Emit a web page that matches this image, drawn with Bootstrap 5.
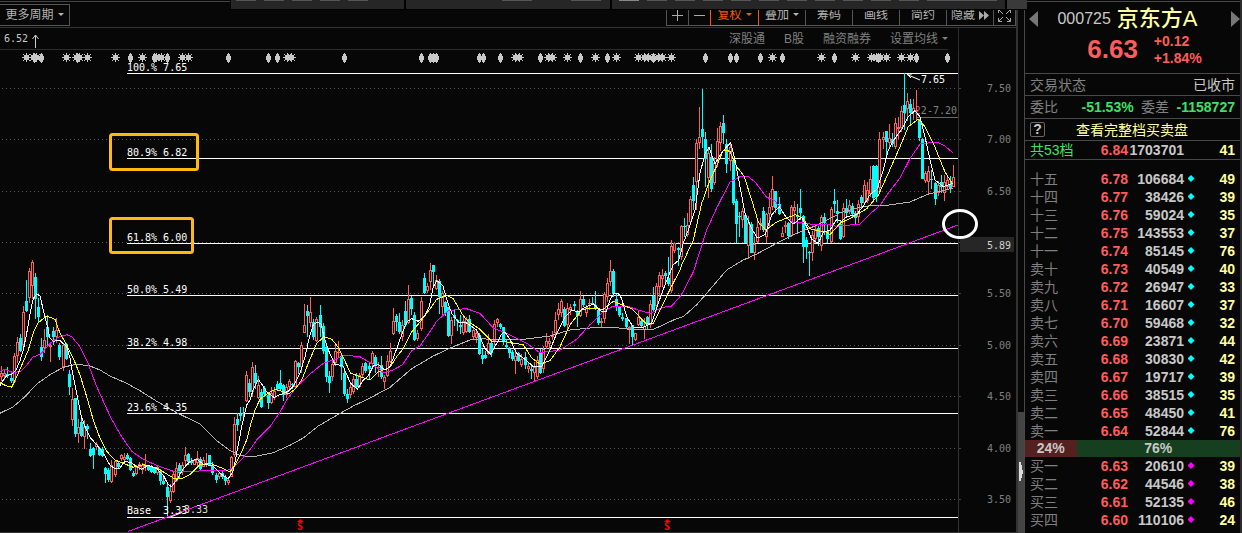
<!DOCTYPE html>
<html lang="zh-CN">
<head>
<meta charset="utf-8">
<meta name="viewport" content="width=device-width, initial-scale=1">
<title>京东方A 000725</title>
<link href="https://cdn.jsdelivr.net/npm/bootstrap@5.3.0/dist/css/bootstrap.min.css" rel="stylesheet">
<style>
:root{--edge:#333;--line:#484848;--red:#ff5c5c;--green:#3ee065;--cream:#ffffa0}
body{background:#070707;color:#c8c8c8;font-family:"Liberation Sans","Noto Sans CJK SC",sans-serif;font-size:14px;line-height:18px}
button{font:inherit;color:inherit;background:none;border:0;padding:0;line-height:18px}
.tools{height:28px;border-bottom:1px solid var(--edge);font-size:12px;padding-top:4px;box-shadow:inset 0 1px #070707,inset 0 2px #444}
.tools button{height:22px;border:1px solid #555;white-space:nowrap;color:#b4b4b4}
.tools .tool{width:48px;margin-left:-1px}
.tools .tool-sq{width:23px;margin-left:-1px}
.tools .tool-on{width:49px;border-color:#f25a0c;color:#f25a0c;position:relative}
.period{width:71px;margin-left:-1px}
.caret{display:inline-block;border:3px solid transparent;border-top-color:currentColor;border-bottom:0;vertical-align:3px;margin-left:4px}
.strip{top:0;left:230px;right:215px;height:10px;overflow:hidden}
.info{height:22px;font-size:12px}
.info-main{border-bottom:1px solid #2c2c2c;margin-right:10px;padding-top:2px}
.info-axis{width:58px;border-left:1px solid #2c2c2c}
.info nav{gap:19px}
.info a{color:#808080;text-decoration:none}
.mono,.chart text{font-family:"DejaVu Sans Mono",monospace;font-size:10px}
.chart{width:100%;height:auto}
.chart-pane{min-width:0}
.splitter{width:8px;border-left:2px solid var(--edge)}
.handle{height:121px;background:#444}
.quote{width:218px;border-left:1px solid var(--line);border-right:2px solid #2c2c2c}
.quote-head{height:73px;border-top:1px solid var(--line);border-bottom:1px solid var(--line);margin-top:1px;padding-top:3px}
.quote-title{gap:6px;padding-right:14px}
.stock-name{font-size:22px;line-height:28px;font-weight:500;color:var(--cream)}
.stock-code{font-size:16px}
.last-price{font-size:26px;line-height:32px;color:var(--red);font-weight:bold}
.price-line{padding-left:24px}
.chg{font-size:14px;line-height:17px;color:var(--red);font-weight:bold}
.qrow{height:22px;border-bottom:1px solid var(--line);padding:0 5px}
.qrow-tall{height:23px}
.dim{color:#808080}
.neg{color:var(--green);font-weight:bold}
.cream{color:var(--cream)}
.help{width:15px;height:15px;border:1px solid #666;border-radius:2px;font-weight:bold;line-height:13px}
.book{table-layout:fixed;width:100%;border-collapse:collapse;text-align:right}
.book td,.book th{height:18px;padding:0;line-height:18px;font-weight:bold}
.book th{font-weight:400;text-align:left;padding-left:5px;color:#808080}
.book td:last-child{padding-right:5px;color:var(--cream)}
.book .px{color:var(--red)}
.book .total th{color:var(--green)}
.book .total td,.book .total th{border-bottom:1px solid var(--line)}
.book .spacer td{height:10px;line-height:10px}
.dot{display:block;margin:auto;width:7px;height:7px;background:#0ff;clip-path:polygon(50% 0,100% 50%,50% 100%,0 50%)}
.buy .dot{background:#f0f}
.balance{height:17px;line-height:17px;text-align:center;font-weight:bold}
.balance-buy{background:#552020}
.balance-sell{background:#153f1e}
</style>
</head>
<body>
<div class="d-flex position-relative">
  <main class="flex-grow-1 chart-pane">
    <div class="tools d-flex align-items-start justify-content-between">
      <button class="period">更多周期<span class="caret"></span></button>
      <div class="d-flex">
        <button class="tool-sq" aria-label="放大"><svg width="11" height="11" stroke="#aaa"><path d="M0 5.500H11M5.500 0V11"/></svg></button>
        <button class="tool-sq" aria-label="缩小"><svg width="11" height="11" stroke="#aaa"><path d="M0 5.500H11"/></svg></button>
        <button class="tool tool-on">复权<span class="caret"></span></button>
        <button class="tool">叠加<span class="caret"></span></button>
        <button class="tool">筹码</button>
        <button class="tool">画线</button>
        <button class="tool">简约</button>
        <button class="tool">隐藏<svg width="10" height="9" class="ms-1" fill="#aaa"><path d="M0 0 5 4.500 0 9ZM5 0 10 4.500 5 9Z"/></svg></button>
        <button class="tool-sq" aria-label="全屏"><svg width="13" height="13" fill="none" stroke="#aaa"><path d="M.5 4V.5H4M9 .5h3.500V4M12.500 9v3.500H9M4 12.500H.5V9M1 1l4 4M12 1 8 5M12 12 8 8M1 12l4-4"/></svg></button>
      </div>
    </div>
    <div class="info d-flex">
      <div class="info-main flex-grow-1 d-flex justify-content-between">
        <span class="mono d-flex ps-1">6.52<svg class="ms-1 mt-1" width="8" height="14" fill="none" stroke="#ccc"><path d="M3.500 14V1M.5 5 3.500 1l3 4"/></svg></span>
        <nav class="d-flex">
          <a href="#">深股通</a><a href="#">B股</a><a href="#">融资融券</a><a href="#">设置均线<span class="caret"></span></a>
        </nav>
      </div>
      <div class="info-axis"></div>
    </div>
    <svg class="chart d-block" id="chart" viewBox="0 50 1016 483" role="img" aria-label="K线图"></svg>
  </main>
  <div class="splitter d-flex flex-column justify-content-end">
    <div class="handle pt-5"><svg width="6" height="24" fill="#ddd" class="d-block"><path d="M1 2h2v3h1v5h1v4H4v4H3v3H1Z"/></svg></div>
  </div>
  <aside class="quote flex-shrink-0">
    <header class="quote-head">
      <div class="d-flex align-items-center justify-content-between ps-1">
        <svg width="9" height="16" fill="#777"><path d="M9 0V16L0 8Z"/></svg>
        <span class="quote-title d-flex align-items-center"><span class="stock-code">000725</span><span class="stock-name">京东方A</span></span>
        <svg width="9" height="16" fill="#777"><path d="M0 0V16L9 8Z"/></svg>
      </div>
      <div class="price-line d-flex justify-content-center gap-3">
        <span class="last-price">6.63</span>
        <div class="chg">+0.12<br>+1.84%</div>
      </div>
    </header>
    <div class="qrow d-flex justify-content-between align-items-center"><span class="dim">交易状态</span><span>已收市</span></div>
    <div class="qrow qrow-tall d-flex justify-content-between align-items-center"><span class="dim">委比</span><span class="neg ms-3">-51.53%</span><span class="dim">委差</span><span class="neg">-1158727</span></div>
    <div class="qrow d-flex align-items-center"><button class="help" aria-label="帮助">?</button><span class="cream mx-auto pe-3">查看完整档买卖盘</span></div>
    <table class="book">
      <colgroup><col style="width:63px"><col style="width:40px"><col style="width:56px"><col style="width:14px"><col></colgroup>
      <tbody><tr class="total"><th scope="row">共53档</th><td class="px">6.84</td><td>1703701</td><td></td><td>41</td></tr></tbody>
      <tbody><tr class="spacer"><td colspan="5"></td></tr></tbody>
      <tbody id="sell"></tbody>
    </table>
    <div class="balance d-flex"><div class="balance-buy" style="width:24%">24%</div><div class="balance-sell" style="width:76%">76%</div></div>
    <table class="book buy">
      <colgroup><col style="width:63px"><col style="width:40px"><col style="width:56px"><col style="width:14px"><col></colgroup>
      <tbody id="buy"></tbody>
    </table>
  </aside>
  <div class="strip position-absolute"><svg width="797" height="10" id="tabs" class="d-block"></svg></div>
</div>
<script src="https://cdn.jsdelivr.net/npm/bootstrap@5.3.0/dist/js/bootstrap.bundle.min.js"></script>
<script>
// order book
const fill = (id, rows) => document.getElementById(id).innerHTML = rows.trim().split('\n').map(r => {
  const [a, p, v, n] = r.trim().split(' ');
  return `<tr><th scope="row">${a}</th><td class="px">${p}</td><td>${v}</td><td><i class="dot"></i></td><td>${n}</td></tr>`;
}).join('');
fill('sell', `十五 6.78 106684 49
十四 6.77 38426 39
十三 6.76 59024 35
十二 6.75 143553 37
十一 6.74 85145 76
卖十 6.73 40549 40
卖九 6.72 26947 33
卖八 6.71 16607 37
卖七 6.70 59468 32
卖六 6.69 23871 44
卖五 6.68 30830 42
卖四 6.67 19717 39
卖三 6.66 38515 35
卖二 6.65 48450 41
卖一 6.64 52844 76`);
fill('buy', `买一 6.63 20610 39
买二 6.62 44546 38
买三 6.61 52135 46
买四 6.60 110106 24`);

// lower edge of the floating tab strip
let tabs = '<rect width="797" height="10" fill="#000"/><path fill="#262626" d="M1 0H174V9H1ZM176 0H380V9H176ZM382 0H775V9H382Z"/><path fill="#3a3a3a" d="M777 0h20v9h-20z"/>';
[6,34,62,90,118,417,445,473,501,529,557,585,613,641,669].forEach(x => tabs += `<rect x="${x}" width="20" height="1" fill="#555"/>`);
tabs += '<path fill="#555" d="M272 0h30v1h-30zM341 0h30v1h-30zM697 0h70v1h-70z"/><path fill="#888" d="M389 0h20v1h-20z"/>';
document.getElementById('tabs').innerHTML = tabs;

// chart data by section: origin, candles (colour+x high top bottom low), averages; units are thirds
const S = [
{x:0,y:230,k:`r4 408 430 440 452,r13 420 430 438 450,c22 412 432 436 445,c34 430 445 452 460,r43 370 378 455 460,r52 320 335 378 400,c61 312 324 362 366,r70 228 246 346 360,c79 150 212 244 246,r88 115 122 203 220,r97 90 97 167 208,c106 130 142 207 268,c115 205 230 262 280,c124 324 352 380 394,r133 298 330 354 370,c142 256 292 322 344,r151 335 345 350 396,c160 290 304 322 346,r169 264 300 320 340,c178 338 344 380 390,r190 338 344 412 422,c199 338 342 388 390,c208 420 432 470 494,r217 475 508 570 587,c226 503 504 612 620,r235 568 590 612 640,c244 560 576 618 622,r253 570 590 622 656,c262 582 588 598 626,c271 640 656 678 680,c280 652 655 674 716,r290 636 642 652 660,c299 650 654 674 678,c308 652 658 678 680,c317 712 714 732 758,c326 714 720 750 755,r335 690 704 756 758,r346 690 692 734 740,c355 692 698 712 718,r364 672 676 688 694,r373 668 680 690 700,c382 670 674 686 690,c391 680 684 720 724,c400 724 728 738 740,r409 704 710 732 736,r418 695 702 712 720,r427 700 706 720 732,r436 672 704 712 722,c445 704 708 720 722,c454 704 710 726 730,c463 710 714 730 732,r472 704 712 728 734,c481 716 722 752 764,c490 734 752 762 766,c502 762 770 800 858,r511 762 782 812 820,r520 725 732 786 790,r529 696 714 752 756,c538 700 706 730 744,r547 695 705 725 735,r556 652 676 692 712,c565 668 672 696 704,c574 684 692 700 706,r583 686 690 704 706,r592 664 684 700 710,c601 682 688 718 724,r610 680 690 710 712,r619 668 698 702 712,c628 674 676 704 706,c637 696 704 730 736,c649 728 734 750 758,r658 726 730 742 746,c667 720 728 742 746,c676 736 742 752 766,r685 742 750 758 764,r694 678 682 740 742,r703 562 582 674 680,c712 548 568 586 602,c721 532 552 558 572,c730 530 548 552 574,r739 424 434 514 516,c748 448 460 486 500`,
w:'0 468 10 450 20 437 36 432 48 420 60 392 70 360 80 310 90 252 100 205 110 192 120 198 130 240 140 280 150 325 160 334 178 330 200 350 210 385 220 440 232 500 244 560 256 592 270 622 290 644 310 670 330 706 345 716 358 716 375 694 395 698 410 710 425 718 445 706 470 716 490 736 505 764 515 770 530 750 550 716 570 694 590 688 610 702 640 708 660 730 685 746 700 722 712 660 725 590 740 525',
y5:'0 458 15 466 35 472 50 440 70 395 85 360 100 308 115 278 140 258 165 268 180 310 200 345 220 385 240 435 260 500 280 570 300 625 320 664 345 690 370 700 400 712 430 704 470 714 500 732 520 744 545 746 570 734 600 704 630 700 665 714 690 726 705 704 725 665 740 630',
m:'0 424 15 418 40 428 62 424 80 406 98 382 122 372 150 340 175 322 200 314 215 320 240 350 265 402 290 470 330 558 360 612 395 664 430 688 470 706 520 724 560 726 610 722 680 722 700 712 720 694 740 670',
g:'0 550 40 530 75 500 110 462 150 434 190 412 230 402 270 408 300 420 330 438 380 460 420 482 470 514 530 548 600 582 650 632 690 662 720 676'},
{x:220,y:240,k:`c88 416 430 442 462,r97 366 382 456 470,c106 374 398 430 446,r115 408 435 474 476,c124 446 456 500 504,c133 438 444 462 470,c145 455 466 488 506,r154 440 460 490 492,r163 440 452 474 480,c172 422 432 446 450,c181 390 430 446 452,c190 432 436 464 484,r199 432 440 466 474,r208 416 424 440 446,c217 428 432 436 446,r226 360 362 440 444,c235 366 370 380 402,r244 306 314 382 400,r253 192 256 278 280,c262 196 214 228 292,r271 172 216 250 260,c280 236 246 290 300,r289 230 236 304 306,c301 196 226 262 290,c310 250 258 332 342,c319 310 320 410 426,c328 394 408 430 458,r337 360 372 412 424,r346 308 332 368 378,r355 302 336 340 350,c364 340 348 380 420,c373 386 400 462 468,c382 448 462 478 490,r391 430 442 466 474,r400 408 416 456 462,c409 400 416 440 444,r418 400 404 440 444,r427 370 378 404 410,c436 366 370 394 400,c448 370 378 388 418,r457 332 338 372 380,c466 346 350 378 400,r475 366 380 384 410,c484 348 376 412 418,r493 404 412 426 446,r502 346 362 408 412,r511 310 334 366 370,r520 204 244 282 284,c529 222 228 246 274,c538 218 246 276 282,r547 240 256 290 304,c556 184 214 256 262,r565 136 178 250 252,c574 168 174 206 224,c583 216 226 300 304,r592 270 280 298 304,r604 172 184 268 274,c613 98 114 158 162,r622 130 138 152 160,r631 70 90 126 150,c640 76 76 96 138,r649 106 120 146 150,c658 118 124 170 222,r667 154 158 200 228,c676 182 186 220 228,c685 200 200 288 292,r694 230 240 288 312,c703 210 224 234 258,c712 238 240 243 274,c721 226 254 262 282,r730 232 244 278 284,r739 230 236 276 280`,
w:'90 480 100 448 115 418 125 432 140 456 162 472 185 462 205 454 222 436 240 400 255 350 270 284 280 254 292 246 303 252 312 290 325 330 345 374 368 376 380 404 392 430 412 448 430 420 445 408 460 378 475 374 495 390 510 380 525 340 545 284 560 246 575 236 595 244 615 226 628 200 640 140 650 122 668 136 680 178 695 220 715 246 738 248',
y5:'90 560 105 510 120 478 140 462 165 448 185 454 205 462 225 448 245 420 265 370 290 310 312 290 335 298 355 322 375 364 392 400 415 408 450 420 475 396 510 382 530 350 550 326 575 276 600 246 625 214 650 178 680 166 700 176 725 220 740 240',
m:'88 632 110 600 150 560 180 516 200 480 230 440 270 402 310 370 340 360 375 346 420 350 450 368 490 398 515 392 548 374 575 332 600 318 625 282 650 244 685 212 735 206',
g:'75 648 110 648 160 638 210 616 250 594 295 558 350 526 400 498 450 474 510 442 575 386 640 348 700 320 740 304'},
{x:450,y:230,k:`c58 256 268 306 308,r70 290 300 322 328,r79 300 310 324 338,c88 310 316 372 376,c97 356 374 388 402,c106 364 374 384 386,r115 312 340 372 376,c124 336 340 370 380,r133 270 282 334 344,r142 264 268 278 292,c151 280 282 292 296,c160 290 292 334 346,c169 330 345 350 358,c178 350 356 368 384,c187 360 366 388 392,r196 358 378 392 432,c205 366 370 392 396,r214 372 386 406 410,c226 366 380 404 416,r235 396 408 416 430,c244 408 418 424 446,r253 396 410 428 452,r262 378 390 440 446,c271 356 366 428 432,r280 348 356 416 430,r289 308 334 352 356,r298 324 334 342 360,r307 304 316 320 330,r316 246 270 308 320,r325 218 236 254 270,r334 206 214 250 260,c343 232 238 288 290,r352 218 234 284 300,r361 222 232 240 254,c373 214 222 228 240,c382 240 244 258 292,r391 182 206 258 262,c400 198 208 226 230,r409 224 230 250 262,r418 208 218 222 240,c427 200 220 223 226,c436 182 224 236 240,c445 236 240 278 286,r454 264 272 280 292,r463 186 192 266 278,r472 144 160 202 216,r481 90 122 156 168,c490 118 122 192 200,c499 188 208 232 244,c508 228 230 256 262,c517 250 260 266 272,c529 264 264 290 296,r538 288 292 298 342,c547 286 286 320 346,r556 308 308 330 332,r565 242 262 286 288,c574 266 274 288 292,r583 264 288 300 326,c592 258 260 286 298,r601 210 222 286 294,c610 172 198 240 242,r619 160 168 228 234,r628 126 134 172 200,r637 116 134 148 172,c646 122 130 138 160,c655 80 144 162 168,r664 30 48 184 188,r673 38 40 62 70,c685 52 54 60 108`,
w:'60 286 80 300 92 326 105 356 122 372 140 340 155 312 165 306 180 328 200 370 230 392 250 410 275 410 300 360 320 310 345 262 365 240 385 246 405 232 430 222 450 242 468 246 480 210 492 190 505 190 515 206 530 260 550 292 580 292 605 280 625 220 645 164 670 104 685 92',
y5:'60 278 90 298 125 334 170 336 220 344 245 384 270 402 300 392 330 350 360 284 395 240 420 234 460 238 490 214 520 226 545 236 570 262 590 282 610 280 640 220 665 168 690 120',
m:'50 236 90 250 130 294 175 312 230 340 270 368 330 360 380 328 420 284 460 246 490 228 530 228 565 240 600 250 640 232 665 228 690 200',
g:'60 330 100 326 140 330 220 328 300 318 360 300 420 294 490 292 540 298 610 298 650 280'},
{x:640,y:70,k:`r124 464 468 560 570,c133 444 468 472 500,r142 430 464 496 500,r151 378 386 456 460,c160 322 346 394 420,r169 208 220 336 420,r178 112 202 220 236,c187 56 178 200 234,c196 186 208 268 350,r205 232 250 324 384,c214 222 262 356 366,r223 262 280 338 346,r232 174 214 270 290,r241 156 168 220 242,c250 136 160 190 222,c259 208 222 282 308,r271 218 232 272 302,c280 266 270 400 404,c289 388 394 462 518,c298 426 438 442 500,r307 414 424 450 474,c316 430 436 518 520,r325 438 460 528 566,c334 456 462 548 550,r343 500 522 548 570,r352 444 470 516 520,r361 444 460 464 480,c370 412 424 480 486,r379 428 432 500 520,r388 368 410 432 470,r397 318 358 410 420,c406 364 364 414 430,c418 380 402 432 436,r427 470 490 500 500,r436 454 466 472 490,c445 456 460 498 508,r454 404 410 498 500,r463 392 410 424 460,c472 402 436 440 486,c481 358 414 430 450,c490 434 438 530 578,c499 500 510 530 566,c508 544 546 550 618,r517 484 496 550 574,r526 462 476 508 520,c535 468 474 502 528,r544 434 440 528 542,c553 430 440 458 494,c562 466 484 506 520,r574 410 416 516 518,c583 358 392 402 430,c592 390 424 432 460`,
w:'118 564 130 520 150 466 165 420 180 310 195 252 207 232 225 282 240 256 255 236 272 218 285 270 300 350 315 430 335 476 352 504 375 494 395 434 418 410 440 444 460 462 485 442 500 470 515 508 535 520 550 486 570 480 590 448',
y5:'125 585 160 510 185 400 210 330 230 288 250 240 270 244 290 290 312 318 335 390 355 456 378 480 410 456 465 434 490 446 510 476 540 484',
m:'130 664 160 606 200 480 230 414 270 336 300 320 325 320 345 336 380 382 405 392 440 444 460 458 490 458 520 464 560 462 595 470',
g:'105 748 130 740 170 704 200 670 260 600 310 570 350 552 410 520 460 494 520 470 560 450 590 436'},
{x:820,y:60,k:`c61 480 492 536 540,r70 430 444 530 534,c79 416 444 460 468,r88 420 436 456 462,c97 430 438 462 470,c106 454 458 474 494,r115 420 432 470 488,c124 406 410 428 440,r133 360 376 430 436,r142 366 390 424 430,r151 318 358 402 410,c160 316 318 414 422,c169 316 318 412 426,r178 216 236 384 400,r190 216 232 240 268,c199 212 214 246 288,r208 192 234 248 262,c217 220 236 252 262,r226 174 188 262 266,r235 170 200 208 236,r244 138 154 204 216,c253 40 136 160 210,r262 100 124 148 182,c271 118 132 160 194,r280 116 144 156 180,r289 90 150 153 180,c298 176 180 234 242,c307 234 238 356 358,r316 332 340 364 368,r325 318 334 366 402,c334 330 356 360 388,c346 366 370 416 434,r355 364 374 400 408,c364 344 366 382 400,r373 346 366 400 422,r382 348 360 380 388,c391 348 372 386 400,r400 314 352 380 382`,
w:'55 480 65 484 80 470 110 464 130 438 150 404 172 386 190 330 205 270 220 242 245 208 265 170 285 152 300 170 315 230 330 300 345 360 370 380 398 370',
y5:'0 515 15 514 30 524 60 490 100 470 140 446 175 406 205 340 240 260 265 200 295 178 315 200 345 262 375 336 398 372',
m:'58 498 120 492 150 462 180 436 210 392 240 354 270 296 300 252 350 246 375 258 398 278',
g:'55 460 110 444 150 437 200 436 270 426 320 404 398 384'}];

let o = '';
const R = Math.round;
const rect = (x, y, w, h, f) => o += `<rect x="${x}" y="${y}" width="${w}" height="${h}" fill="${f}"/>`;
const text = (x, y, s, f, a) => o += `<text x="${x}" y="${y}" fill="${f}" ${a || ''} xml:space="preserve">${s}</text>`;

o += '<g shape-rendering="crispEdges">';
[88,139,191,242,293,345,396,448,499].forEach(y => o += `<path d="M2 ${y}.5H958" stroke="#5a5a5a" stroke-dasharray="1 3"/><path d="M958 ${y}.5h3" stroke="#444"/>`);
rect(958, 50, 1, 482, '#333');
rect(0, 532, 1016, 1, '#333');
o += '</g>';
text(957, 114, '7.22-7.20', '#808080', 'text-anchor="end"');
o += '<g shape-rendering="crispEdges">';
rect(916, 117, 42, 1, '#666');
[73,158,243,295,348,413,517].forEach(y => rect(127, y, 831, 1, '#fff'));
for (const s of S) for (const c of s.k.split(',')) {
  const up = c[0] === 'r', n = c.slice(1).split(' ').map(Number);
  const x = s.x + Math.floor(n[0] / 3), [h, t, b, l] = n.slice(1).map(v => s.y + R(v / 3));
  const bh = Math.max(1, b - t), f = up ? '#ff5c5c' : '#0ff';
  if (up) {
    rect(x, h, 1, t - h, f);
    rect(x, t + bh, 1, Math.max(0, l - b), f);
    if (bh > 2) o += `<rect x="${x - .5}" y="${t + .5}" width="2" height="${bh - 1}" fill="#070707" stroke="${f}"/>`;
    else rect(x - 1, t, 3, bh, f);
  } else {
    rect(x, h, 1, Math.max(1, l - h), f);
    rect(x - 1, t, 3, bh, f);
  }
}
[['g','#b4b4b4'],['m','#f0f'],['y5','#ff0'],['w','#fff']].forEach(([key, f]) => {
  const pts = [];
  for (const s of S) { const n = s[key].split(' ').map(Number); for (let i = 0; i < n.length; i += 2) pts.push((s.x + n[i] / 3).toFixed(1) + ',' + (s.y + n[i + 1] / 3).toFixed(1)); }
  o += `<polyline points="${pts.join(' ')}" fill="none" stroke="${f}"/>`;
});
o += '<path d="M128 531.500 958 225" stroke="#f0f"/></g>';

// event markers
const star = [26,33,36,66,76,79,87,115,142,156,161,182,188,287,291,515,519,548,552,567,595,616,638,644,648,658,662,671,772,821,855,871,876,880,886,901,910];
const dia = [34,41,77,130,154,167,228,268,277,344,421,430,433,436,479,483,500,540,580,607,653,705,730,736,760,782,834,878,916,947];
o += '<g fill="#c8c8c8" shape-rendering="crispEdges">';
star.forEach(x => o += `<path d="M${x - 1} 55h3v5h-3zM${x - 2} 56h5v3h-5zM${x} 53h1v9h-1zM${x - 4} 57h9v1h-9zM${x - 3} 54h1v1h-1zM${x + 3} 54h1v1h-1zM${x - 3} 60h1v1h-1zM${x + 3} 60h1v1h-1zM${x - 2} 55h1v1h-1zM${x + 2} 55h1v1h-1zM${x - 2} 59h1v1h-1zM${x + 2} 59h1v1h-1z"/>`);
dia.forEach(x => o += `<path d="M${x} 53h1v1h1v2h1v4h-1v2h-1v1h-1v-1h-1v-2h-1v-4h1v-2h1z"/>`);
o += '</g>';

// retracement labels
[[71,'100.% 7.65'],[156,'80.9% 6.82'],[241,'61.8% 6.00'],[293,'50.0% 5.49'],[346,'38.2% 4.98'],[411,'23.6% 4.35'],[514,'Base  3.33']].forEach(([y, s]) => text(127, y, s, '#fff'));
text(184, 513, '3.33', '#ddd');
text(921, 83, '7.65', '#fff');
o += '<path d="M907 74.500 920 80M907 74l5 0M907 74l4 4M169 517.500l13-5" stroke="#fff" fill="none"/>';
o += '<rect x="110.500" y="134.500" width="87" height="35" rx="2" fill="none" stroke="#ffb90f" stroke-width="3"/><rect x="110.500" y="218.500" width="82" height="34" rx="2" fill="none" stroke="#ffb90f" stroke-width="3"/>';

// price axis
rect(960, 237, 54, 15, '#262626');
[[92,'7.50'],[143,'7.00'],[195,'6.50'],[297,'5.50'],[349,'5.00'],[400,'4.50'],[452,'4.00'],[503,'3.50']].forEach(([y, s]) => text(987, y, s, '#808080'));
text(987, 249, '5.89', '#d0d0d0');
o += '<ellipse cx="960" cy="224" rx="16.500" ry="13.500" fill="none" stroke="#fff" stroke-width="3"/>';
[300, 667].forEach(x => { text(x, 530, 'S', '#f00', 'text-anchor="middle" font-weight="bold"'); o += `<path d="M${x - 3} 522h7l-3.500-3z" fill="#f00"/>`; });
document.getElementById('chart').innerHTML = o;
</script>
</body>
</html>
